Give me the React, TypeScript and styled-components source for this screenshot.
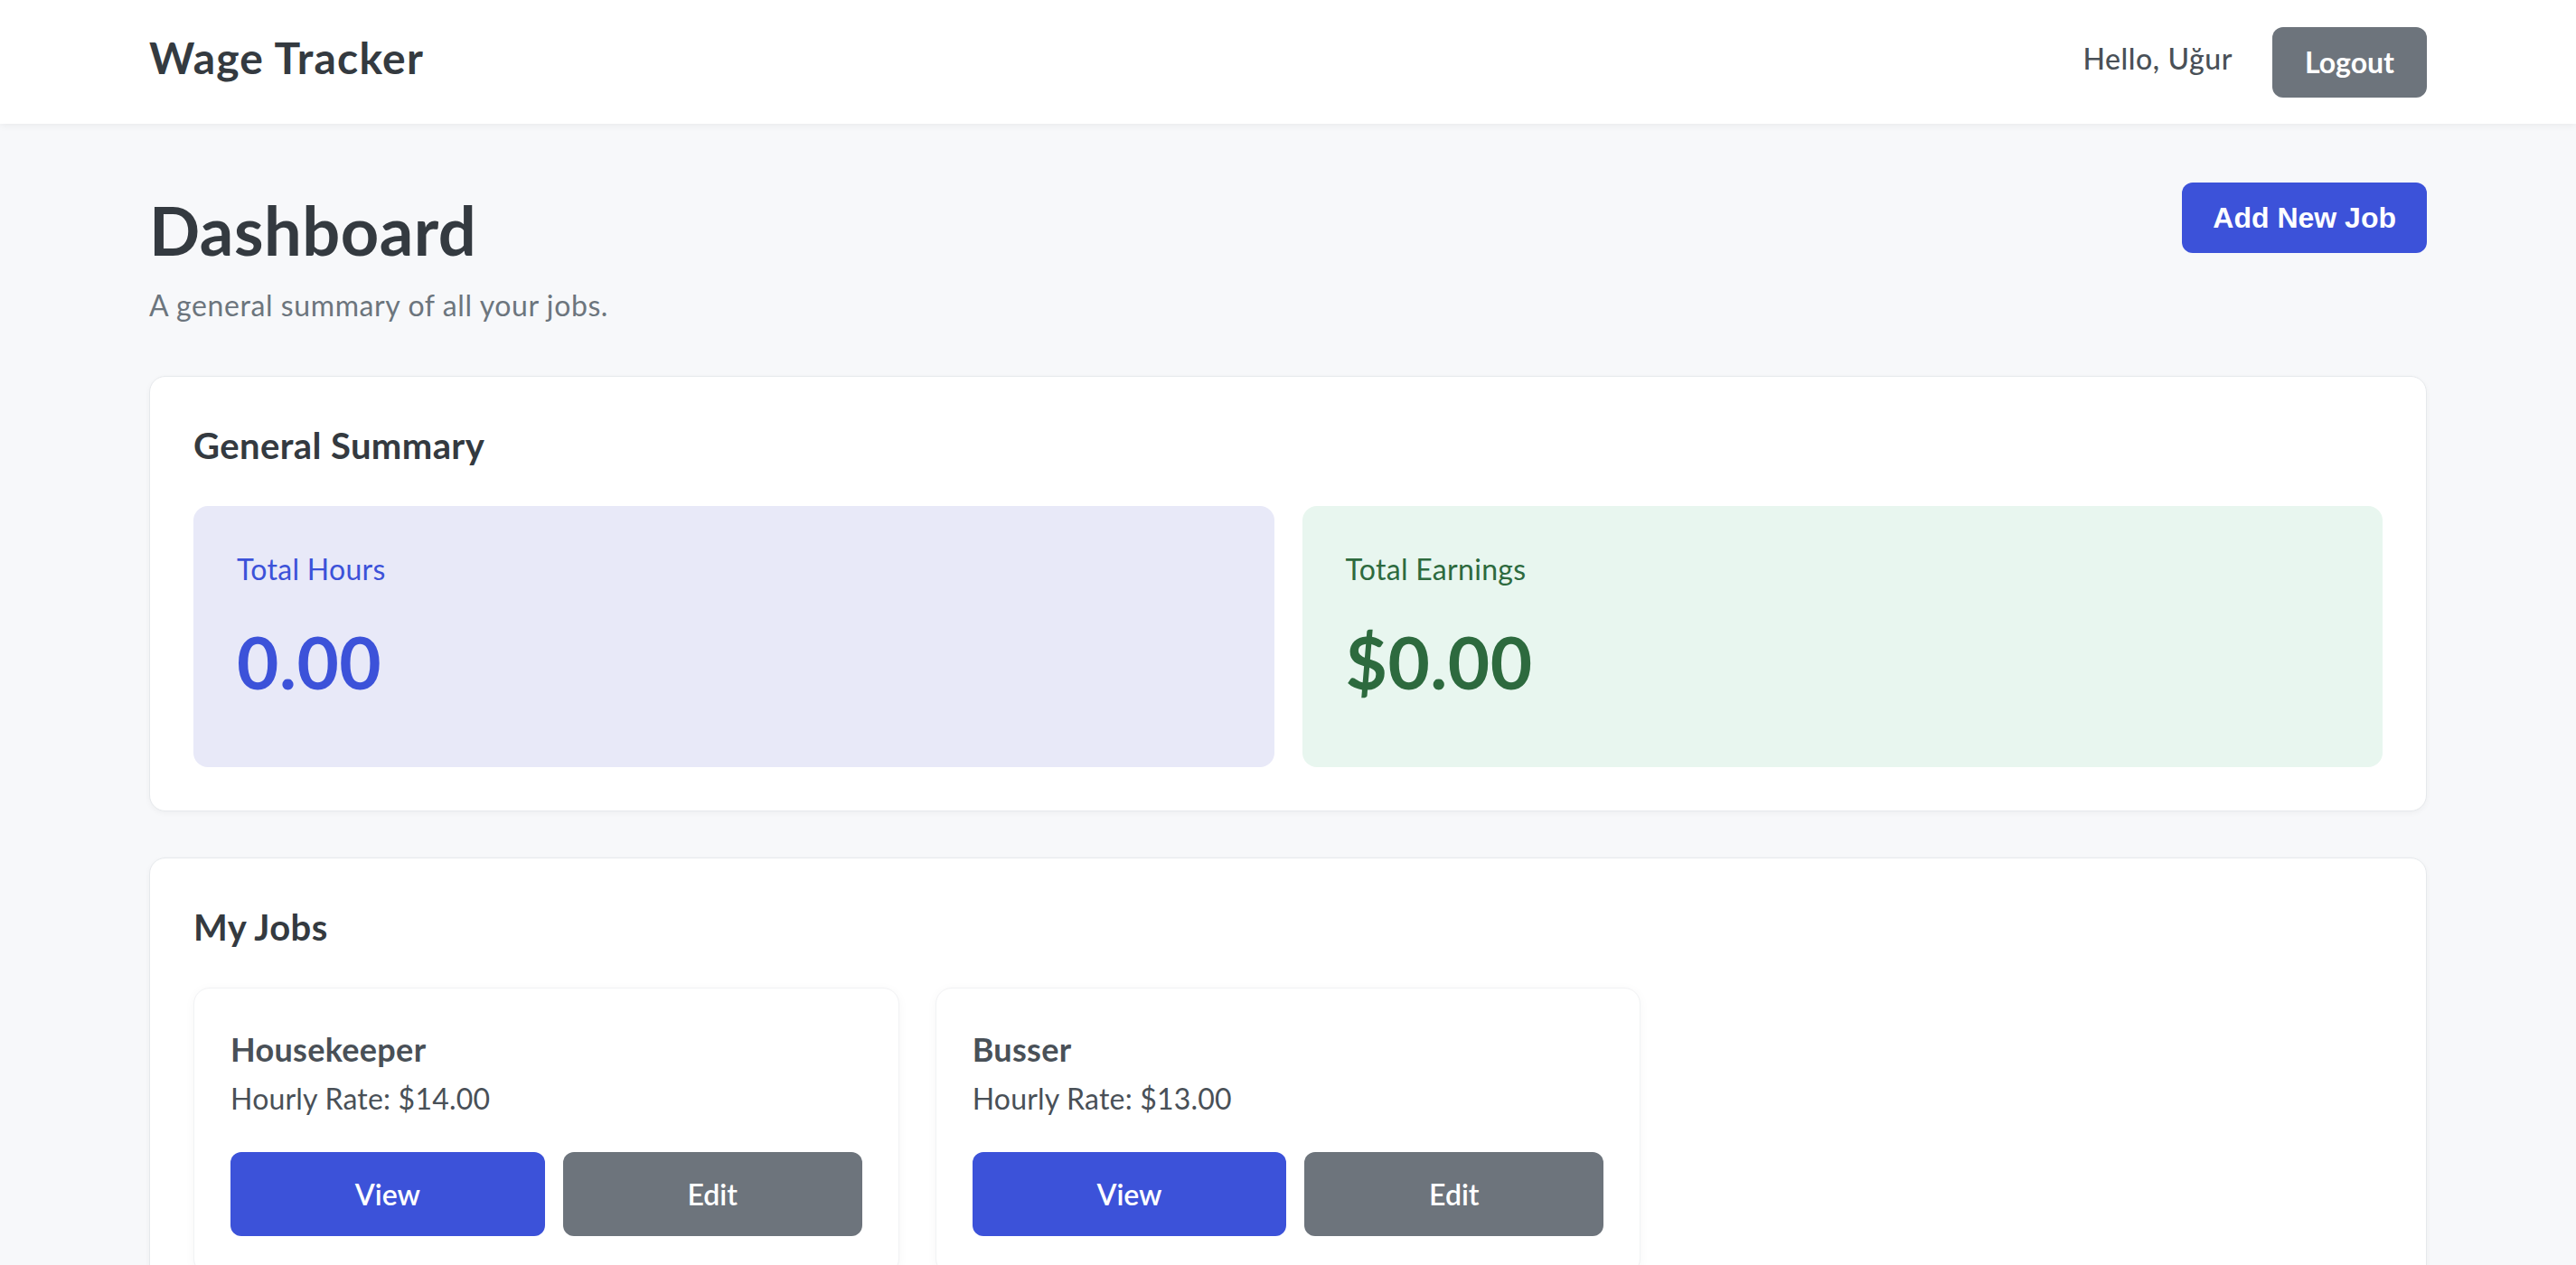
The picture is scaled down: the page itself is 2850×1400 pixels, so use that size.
import React from 'react'
import styled, { createGlobalStyle } from 'styled-components'

const COLORS = {
  page: '#f7f8fa',
  text: '#343a40',
  body: '#495057',
  muted: '#6c757d',
  blue: '#3c52d9',
  gray: '#6d747c',
  border: '#e6e9ec',
  hoursBg: '#e8e9f8',
  earnBg: '#e8f6ef',
  green: '#2d6a3e',
}

const GlobalStyle = createGlobalStyle`
  html {
    scrollbar-width: none;
  }
  html::-webkit-scrollbar {
    display: none;
  }
  body {
    margin: 0;
    background: ${COLORS.page};
    font-family: Lato, 'Open Sans', sans-serif;
    color: ${COLORS.text};
  }
  * {
    box-sizing: border-box;
  }
`

const jobs = [
  { id: 1, title: 'Housekeeper', rate: 14 },
  { id: 2, title: 'Busser', rate: 13 },
]

const App: React.FC = () => {
  return (
    <>
      <GlobalStyle />
      <Navbar>
        <Container>
          <NavInner>
            <Brand>Wage Tracker</Brand>
            <NavRight>
              <Greeting>Hello, Uğur</Greeting>
              <NavButton type="button">Logout</NavButton>
            </NavRight>
          </NavInner>
        </Container>
      </Navbar>

      <Main>
        <Container>
          <HeaderRow>
            <TitleBlock>
              <Title>Dashboard</Title>
              <Subtitle>A general summary of all your jobs.</Subtitle>
            </TitleBlock>
            <AddButton type="button">Add New Job</AddButton>
          </HeaderRow>

          <Card>
            <CardTitle>General Summary</CardTitle>
            <StatGrid>
              <StatBox tone="blue">
                <StatLabel>Total Hours</StatLabel>
                <StatValue>0.00</StatValue>
              </StatBox>
              <StatBox tone="green">
                <StatLabel>Total Earnings</StatLabel>
                <StatValue>$0.00</StatValue>
              </StatBox>
            </StatGrid>
          </Card>

          <Card $spaced>
            <CardTitle>My Jobs</CardTitle>
            <JobGrid>
              {jobs.map((job) => (
                <JobCard key={job.id}>
                  <JobTitle>{job.title}</JobTitle>
                  <JobRate>Hourly Rate: ${job.rate.toFixed(2)}</JobRate>
                  <JobActions>
                    <ActionButton variant="primary" type="button">
                      View
                    </ActionButton>
                    <ActionButton variant="secondary" type="button">
                      Edit
                    </ActionButton>
                  </JobActions>
                </JobCard>
              ))}
            </JobGrid>
          </Card>
        </Container>
      </Main>
    </>
  )
}

export default App

const Container = styled.div`
  width: 2520px;
  margin: 0 auto;
`

const Navbar = styled.header`
  height: 137px;
  background: #fff;
  box-shadow: 0 2px 8px rgba(0, 0, 0, 0.06);
  position: relative;
  z-index: 1;
`

const NavInner = styled.div`
  height: 137px;
  display: flex;
  align-items: center;
  justify-content: space-between;
`

const Brand = styled.div`
  font-size: 48px;
  font-weight: 700;
  line-height: 1.2;
  letter-spacing: 1.2px;
  color: ${COLORS.text};
  margin-bottom: 9px;
`

const NavRight = styled.div`
  display: flex;
  align-items: center;
  gap: 44px;
`

const Greeting = styled.span`
  font-size: 32px;
  font-weight: 500;
  line-height: 48px;
  letter-spacing: 0.6px;
  color: ${COLORS.body};
  margin-bottom: 8px;
`

const NavButton = styled.button`
  height: 78px;
  padding: 0 36px;
  border: none;
  border-radius: 12px;
  background: ${COLORS.gray};
  color: #fff;
  font-family: Lato, sans-serif;
  font-size: 32px;
  font-weight: 700;
  line-height: 48px;
  cursor: pointer;
`

const Main = styled.main`
  padding-top: 65px;
  padding-bottom: 60px;
`

const HeaderRow = styled.div`
  display: flex;
  justify-content: space-between;
  align-items: flex-start;
`

const TitleBlock = styled.div`
  padding-top: 8px;
`

const Title = styled.h1`
  margin: 0;
  font-size: 74px;
  font-weight: 700;
  line-height: 89px;
  letter-spacing: 0.5px;
  color: ${COLORS.text};
`

const Subtitle = styled.p`
  margin: 15px 0 0;
  font-size: 32px;
  line-height: 48px;
  letter-spacing: 0.6px;
  color: ${COLORS.muted};
`

const AddButton = styled.button`
  height: 78px;
  padding: 0 34px;
  border: none;
  border-radius: 12px;
  background: ${COLORS.blue};
  color: #fff;
  font-family: 'Liberation Sans', Arial, sans-serif;
  font-size: 32px;
  font-weight: 700;
  line-height: 48px;
  cursor: pointer;
`

const Card = styled.section<{ $spaced?: boolean }>`
  margin-top: ${({ $spaced }) => ($spaced ? '51px' : '54px')};
  background: #fff;
  border: 1px solid ${COLORS.border};
  border-radius: 18px;
  box-shadow: 0 2px 6px rgba(0, 0, 0, 0.04);
  padding: 46px 48px 48px;
`

const CardTitle = styled.h2`
  margin: 0 0 37px;
  font-size: 40px;
  font-weight: 700;
  line-height: 60px;
  letter-spacing: 0.4px;
  color: ${COLORS.text};
`

const StatGrid = styled.div`
  display: grid;
  grid-template-columns: 1fr 1fr;
  gap: 31px;
`

const StatBox = styled.div<{ tone: 'blue' | 'green' }>`
  border-radius: 16px;
  padding: 46px 48px;
  background: ${({ tone }) => (tone === 'blue' ? COLORS.hoursBg : COLORS.earnBg)};
  color: ${({ tone }) => (tone === 'blue' ? COLORS.blue : COLORS.green)};
`

const StatLabel = styled.div`
  font-size: 32px;
  line-height: 48px;
  letter-spacing: 0.3px;
`

const StatValue = styled.div`
  margin: 30px 0 23px;
  font-size: 80px;
  font-weight: 700;
  line-height: 96px;
  letter-spacing: 0.5px;
`

const JobGrid = styled.div`
  display: grid;
  grid-template-columns: repeat(3, 1fr);
  gap: 40px;
`

const JobCard = styled.div`
  background: #fff;
  border: 1px solid #f1f2f4;
  border-radius: 18px;
  box-shadow: 0 2px 12px rgba(0, 0, 0, 0.04);
  padding: 46px 40px 42px;
`

const JobTitle = styled.h3`
  margin: 0;
  font-size: 36px;
  font-weight: 700;
  line-height: 43px;
  letter-spacing: 0.3px;
  color: ${COLORS.body};
`

const JobRate = styled.p`
  margin: 9px 0 0;
  font-size: 32px;
  line-height: 48px;
  letter-spacing: 0.2px;
  color: ${COLORS.body};
`

const JobActions = styled.div`
  display: flex;
  gap: 20px;
  margin-top: 35px;
`

const ActionButton = styled.button<{ variant: 'primary' | 'secondary' }>`
  flex: 1 1 auto;
  height: 93px;
  border: none;
  border-radius: 12px;
  background: ${({ variant }) => (variant === 'primary' ? COLORS.blue : COLORS.gray)};
  color: #fff;
  font-family: Lato, sans-serif;
  font-size: 32px;
  font-weight: 600;
  line-height: 48px;
  padding: 0 24px;
  cursor: pointer;
`
